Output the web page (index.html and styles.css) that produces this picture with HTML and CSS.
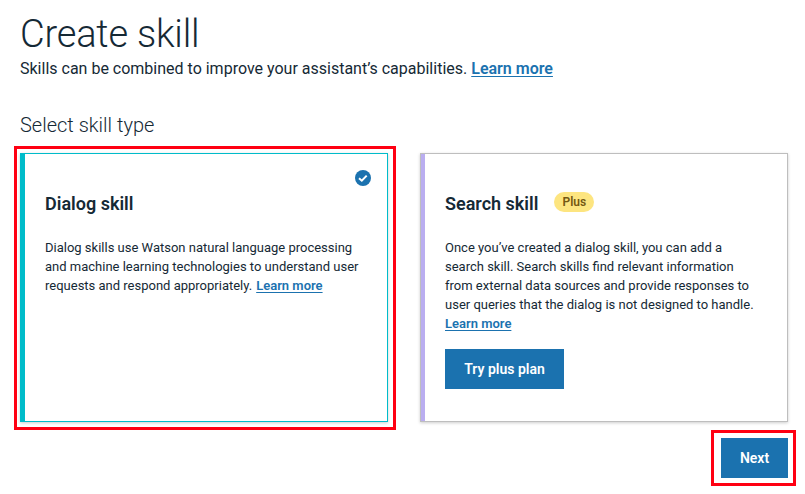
FILE: index.html
```html
<!DOCTYPE html>
<html lang="en">
<head>
<meta charset="utf-8">
<title>Create skill</title>
<link rel="stylesheet" href="styles.css">
</head>
<body>
<main class="page">
  <h1 class="title"><span>Create skill</span></h1>
  <p class="subtitle"><span class="sub-text">Skills can be combined to improve your assistant’s capabilities.</span><a class="link" href="#">Learn more</a></p>
  <h2 class="section"><span>Select skill type</span></h2>
  <div class="cards">
    <div class="highlight highlight-card">
      <section class="card card-dialog">
        <svg class="check" viewBox="0 0 16 16"><circle cx="8" cy="8" r="8" fill="#1b72af"/><path d="M4 8.2 6.8 10.7 11.7 5.6" fill="none" stroke="#fff" stroke-width="2"/></svg>
        <div class="card-head"><h3><span class="n1">Dialog skill</span></h3></div>
        <p class="desc">
          <span class="line d1">Dialog skills use Watson natural language processing</span>
          <span class="line d2">and machine learning technologies to understand user</span>
          <span class="line"><span class="d3">requests and respond appropriately.</span><a class="link" href="#">Learn more</a></span>
        </p>
      </section>
    </div>
    <section class="card card-search">
      <div class="card-head"><h3><span class="n2">Search skill</span></h3><span class="badge">Plus</span></div>
      <p class="desc">
        <span class="line s1">Once you’ve created a dialog skill, you can add a</span>
        <span class="line s2">search skill. Search skills find relevant information</span>
        <span class="line s3">from external data sources and provide responses to</span>
        <span class="line s4">user queries that the dialog is not designed to handle.</span>
        <span class="line"><a class="link" href="#">Learn more</a></span>
      </p>
      <button class="btn btn-plan">Try plus plan</button>
    </section>
  </div>
  <div class="highlight highlight-next"><button class="btn btn-next">Next</button></div>
</main>
</body>
</html>
```
FILE: styles.css
```css
* { box-sizing: border-box; }
body { margin: 0; background: #fff; color: #152935; font-family: Roboto, "Liberation Sans", sans-serif; }
h1, h2, h3, p { margin: 0; white-space: nowrap; }
.page { width: 805px; height: 494px; display: flex; flex-direction: column; overflow: hidden; }
.title { height: 57px; padding: 10px 0 0 20px; font-size: 38px; line-height: 48px; font-weight: 300; letter-spacing: -0.2px; }
.subtitle { display: flex; gap: 4px; height: 24px; padding-left: 20px; font-size: 16px; line-height: 24px; }
.link { color: #1b72af; font-weight: 600; text-decoration: underline; text-underline-offset: 2px; text-decoration-thickness: 1px; }
.section { height: 65px; padding: 32px 0 0 20px; font-size: 20px; line-height: 24px; font-weight: 300; }
.cards { display: flex; align-items: flex-start; gap: 24px; padding-left: 14px; height: 284px; }
.highlight { border: 3px solid #ff0012; }
.highlight-card { width: 382px; height: 284px; padding: 4px 5px 5px 3px; }
.card { position: relative; width: 368px; height: 269px; border: 1px solid #bebebe; background: #fff; padding: 34px 0 0 20px; box-shadow: 0 1px 3px rgba(0,0,0,.2); }
.card-dialog { border-color: #00bcca; border-left-width: 5px; width: 368px; }
.card-search { margin-top: 7px; padding-left: 24px; background: linear-gradient(to right, #baaef0 4px, #fff 4px); }
.check { position: absolute; top: 16px; right: 16px; width: 16px; height: 16px; }
.card-head { display: flex; height: 50px; }
.card-head h3 { font-size: 18px; line-height: 32px; font-weight: 600; }
.badge { width: 40px; height: 20px; margin: 4px 0 0 16px; border-radius: 10px; background: #fde580; color: #745812; font-size: 12px; font-weight: 600; line-height: 20px; text-align: center; }
.desc { font-size: 13px; line-height: 19px; }
.line { display: flex; gap: 4px; }
.btn { display: block; height: 40px; padding: 0; border: 0; background: #1b72af; color: #fff; font: 600 14px/40px Roboto, "Liberation Sans", sans-serif; text-align: center; }
.btn-plan { width: 119px; margin-top: 16px; }
.highlight-next { width: 85px; height: 56px; margin-left: 711px; padding: 5px 5px 5px 7px; }
.btn-next { width: 67px; }
```
